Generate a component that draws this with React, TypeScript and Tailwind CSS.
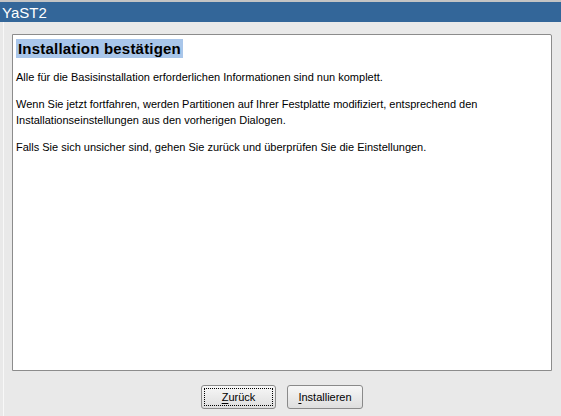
export default function App() {
  const font = { fontFamily: '"Liberation Sans", Arial, sans-serif' };
  return (
    <div
      className="flex h-[416px] w-[561px] flex-col overflow-hidden bg-[#e9e9e9] text-black"
      style={font}
    >
      <div className="flex h-[22px] items-center border-t-2 border-[#c4c4c4] bg-[#336699] pl-[2px] text-[15px] leading-none text-white">
        YaST2
      </div>
      <div className="ml-[3px] flex flex-1 flex-col border-l border-[#f8f8f8] pl-[8px] pr-[9px] pt-[12px]">
        <div className="h-[337px] rounded-tr-[2px] border border-[#8c8c8c] bg-white pl-[3px] pt-[4px]">
          <h1 className="w-fit bg-[#a9c6ea] px-[2px] text-[15px] font-bold leading-[19px] tracking-[0.2px]">
            Installation bestätigen
          </h1>
          <div className="mt-[11px] space-y-[11px] text-[11px] leading-[16px]">
            <p>Alle für die Basisinstallation erforderlichen Informationen sind nun komplett.</p>
            <p>
              Wenn Sie jetzt fortfahren, werden Partitionen auf Ihrer Festplatte modifiziert, entsprechend den
              <br />
              Installationseinstellungen aus den vorherigen Dialogen.
            </p>
            <p>Falls Sie sich unsicher sind, gehen Sie zurück und überprüfen Sie die Einstellungen.</p>
          </div>
        </div>
        <div className="mt-[14px] flex justify-center gap-[11px]">
          <button className="h-[24px] w-[75px] rounded-[3px] border border-[#8a8a8a] bg-gradient-to-b from-[#f7f7f7] to-[#dedede] text-[11px] outline-1 outline-offset-[-4px] outline-dotted outline-black">
            <span className="underline underline-offset-2">Z</span>urück
          </button>
          <button className="h-[24px] w-[76px] rounded-[3px] border border-[#8a8a8a] bg-gradient-to-b from-[#f7f7f7] to-[#dedede] text-[11px]">
            <span className="underline underline-offset-2">I</span>nstallieren
          </button>
        </div>
      </div>
    </div>
  );
}
